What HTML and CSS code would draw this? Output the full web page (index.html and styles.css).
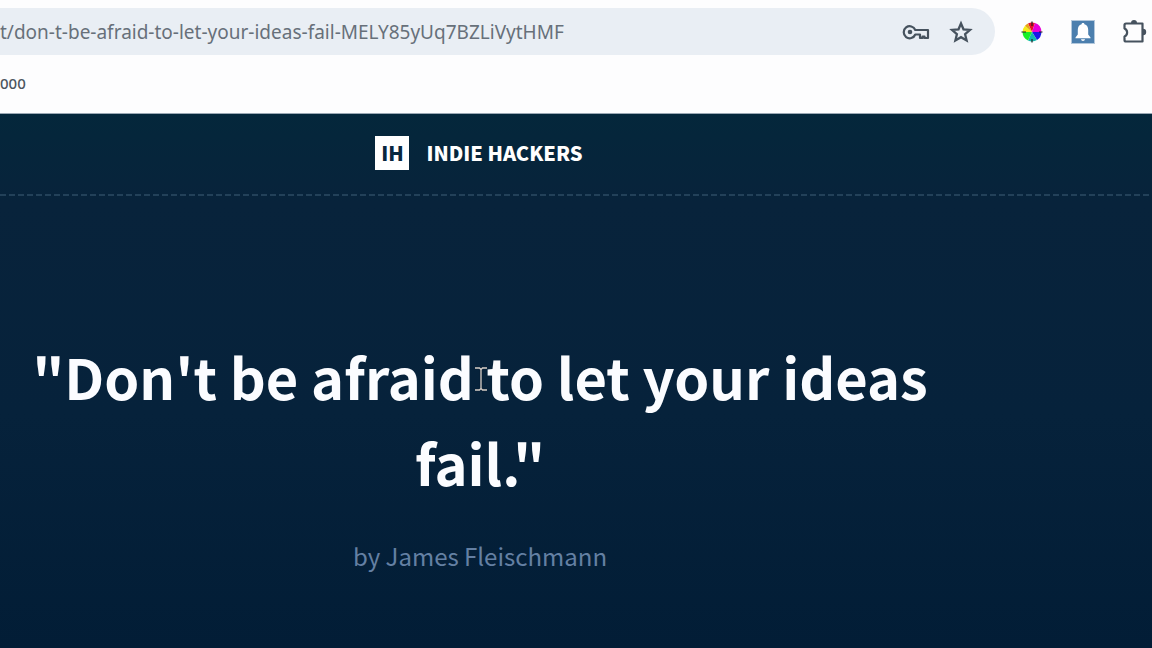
FILE: index.html
```html
<!DOCTYPE html>
<html lang="en">
    <head>
        <meta charset="utf-8">
        <title>Indie Hackers</title>
        <link rel="stylesheet" href="styles.css">
    </head>
    <body>
        <div class="toolbar">
            <form class="address-bar">
                <input type="text" class="address" aria-label="Address" value="t/don-t-be-afraid-to-let-your-ideas-fail-MELY85yUq7BZLiVytHMF">
                <button type="button" class="icon-btn" aria-label="Passwords">
                    <svg width="28" height="20" viewBox="0 0 28 20" fill="none" stroke="#46525e" stroke-width="2.200">
                        <path d="M13.3 8A6 6 0 1 0 13.3 12.5H18V16H20.500V14.500H22.500V16H26V8Z" stroke-linejoin="round"/>
                        <circle cx="8" cy="10" r="2.300" fill="#46525e" stroke="none"/>
                    </svg>
                </button>
                <button type="button" class="icon-btn" aria-label="Bookmark">
                    <svg width="24" height="24" viewBox="0 0 24 24" fill="none" stroke="#46525e" stroke-width="2.300">
                        <path d="M12 3.500L14.500 9.300L21 9.900L16.100 14.200L17.600 20.500L12 17.200L6.400 20.500L7.900 14.200L3 9.900L9.500 9.300Z"/>
                    </svg>
                </button>
            </form>
            <div class="extensions">
                <button type="button" class="icon-btn" aria-label="Color picker">
                    <svg width="24" height="24" viewBox="-12 -12 24 24">
                        <path d="M0 0L-4-8.500A9.400 9.400 0 0 1 3-8.900Z" fill="#e8102c"/>
                        <path d="M0 0L3-8.900A9.400 9.400 0 0 1 9.400 0Z" fill="#e800d8"/>
                        <path d="M0 0H9.400A9.400 9.400 0 0 1 5 8Z" fill="#1818e8"/>
                        <path d="M0 0L5 8A9.400 9.400 0 0 1-4 8.500Z" fill="#10b8b0"/>
                        <path d="M0 0L-4 8.500A9.400 9.400 0 0 1-9.400 0Z" fill="#18f028"/>
                        <path d="M0 0H-9.400A9.400 9.400 0 0 1-7-6.300Z" fill="#f4ec18"/>
                        <path d="M0 0L-7-6.300A9.400 9.400 0 0 1-4-8.500Z" fill="#e8a018"/>
                        <path d="M0-10.500V-6M0 7V10.500M-10.500 0H-6M7 0H10.500" stroke="#222" stroke-width="1.200"/>
                    </svg>
                </button>
                <button type="button" class="icon-btn" aria-label="Notifications">
                    <svg width="24" height="24" viewBox="0 0 24 24">
                        <rect width="23" height="23" x=".5" y=".5" fill="#4c7fae" stroke="#b3c8dc"/>
                        <path d="M12 3C12.900 3 13.400 3.500 13.400 4.300C16 5 17.200 7 17.200 10V14.500L19.500 17.500V18.300H4.500V17.500L6.800 14.500V10C6.800 7 8 5 10.600 4.300C10.600 3.500 11.100 3 12 3ZM10 19.300H14C13.800 20.400 13 21 12 21S10.200 20.400 10 19.300Z" fill="#fff"/>
                    </svg>
                </button>
                <button type="button" class="icon-btn" aria-label="Extensions">
                    <svg width="26" height="26" viewBox="0 0 26 26">
                        <path d="M4 4.500H20.500V22.500H4C3 22.500 2.500 22 2.500 21V17.500C6 16 6 11 2.500 9.500V6C2.500 5 3 4.500 4 4.500Z" fill="none" stroke="#46525e" stroke-width="2.200" stroke-linejoin="round"/>
                        <path d="M9 4A3 3 0 0 1 15 4ZM21 9.800A3.200 3.200 0 0 1 21 16.200Z" fill="#46525e"/>
                    </svg>
                </button>
            </div>
        </div>
        <div class="bookmarks">
            <a href="#" class="bookmark">000</a>
        </div>
        <div class="page">
            <header class="site-header">
                <a href="#" class="brand">
                    <span class="brand-mark">IH</span>
                    <span class="brand-name">INDIE HACKERS</span>
                </a>
            </header>
            <main class="post">
                <h1 class="post-title">"Don't be afraid to let your ideas fail."</h1>
                <p class="post-author">by James Fleischmann</p>
                <svg class="text-cursor" width="14" height="26" viewBox="0 0 14 26" fill="none">
                    <path d="M1 2H5.500L7 3.500L8.500 2H13M1 24H5.500L7 22.500L8.500 24H13M7 3V23" stroke="#071f36" stroke-width="3"/>
                    <path d="M1 2H5.500L7 3.500L8.500 2H13M1 24H5.500L7 22.500L8.500 24H13M7 3V23" stroke="#d8cfc8" stroke-width="1.300"/>
                </svg>
            </main>
        </div>
    </body>
</html>
```
FILE: styles.css
```css
body{
    margin: 0;
    min-height: 100vh;
    display: flex;
    flex-direction: column;
    background-color: #fdfdfe;
    font-family: "Noto Sans CJK SC", "Open Sans", sans-serif;
}
.toolbar{
    display: flex;
    align-items: center;
    gap: 25px;
    padding: 8px 4px 8px 0;
}
.address-bar{
    flex: 1;
    display: flex;
    align-items: center;
    gap: 19px;
    height: 47px;
    padding-right: 22px;
    box-sizing: border-box;
    border-radius: 0 24px 24px 0;
    background-color: #e9eef4;
}
.address{
    flex: 1;
    min-width: 0;
    padding: 0;
    border: 0;
    outline: 0;
    background: none;
    color: #67707a;
    font-family: "Noto Sans", sans-serif;
    font-size: 19px;
}
.icon-btn{
    display: flex;
    padding: 0;
    border: 0;
    background: none;
}
.extensions{
    display: flex;
    align-items: center;
    gap: 27px;
}
.bookmarks{
    height: 51px;
    box-sizing: border-box;
    padding-top: 7px;
    border-bottom: 1px solid #9aa8b4;
}
.bookmark{
    color: #4d565f;
    font-family: "Noto Sans", sans-serif;
    font-size: 15px;
    font-weight: 500;
    line-height: 24px;
    text-decoration: none;
}
.page{
    flex: 1;
    background-image: linear-gradient(#04273b, #08233b 90px, #06223b 300px, #021d36);
}
.site-header{
    display: flex;
    justify-content: center;
    padding: 22px 194px 26px 0;
    background: repeating-linear-gradient(90deg, #234159 0 6px, transparent 6px 9px) bottom / 100% 2px no-repeat;
}
.brand{
    display: flex;
    align-items: center;
    gap: 17px;
    color: #fff;
    font-size: 20px;
    font-weight: 900;
    line-height: 34px;
    text-decoration: none;
}
.brand-mark{
    width: 34px;
    background-color: #fff;
    color: #08273e;
    text-align: center;
}
.post{
    position: relative;
    padding: 137px 192px 0 0;
    text-align: center;
}
.post-title{
    margin: 0;
    color: #fbfcff;
    font-size: 56px;
    font-weight: bold;
    line-height: 86px;
}
.text-cursor{
    position: absolute;
    top: 170px;
    left: calc(50% - 102px);
}
.post-author{
    margin: 32px 0 0;
    color: #6480a3;
    font-size: 24px;
    line-height: 38px;
}
```
